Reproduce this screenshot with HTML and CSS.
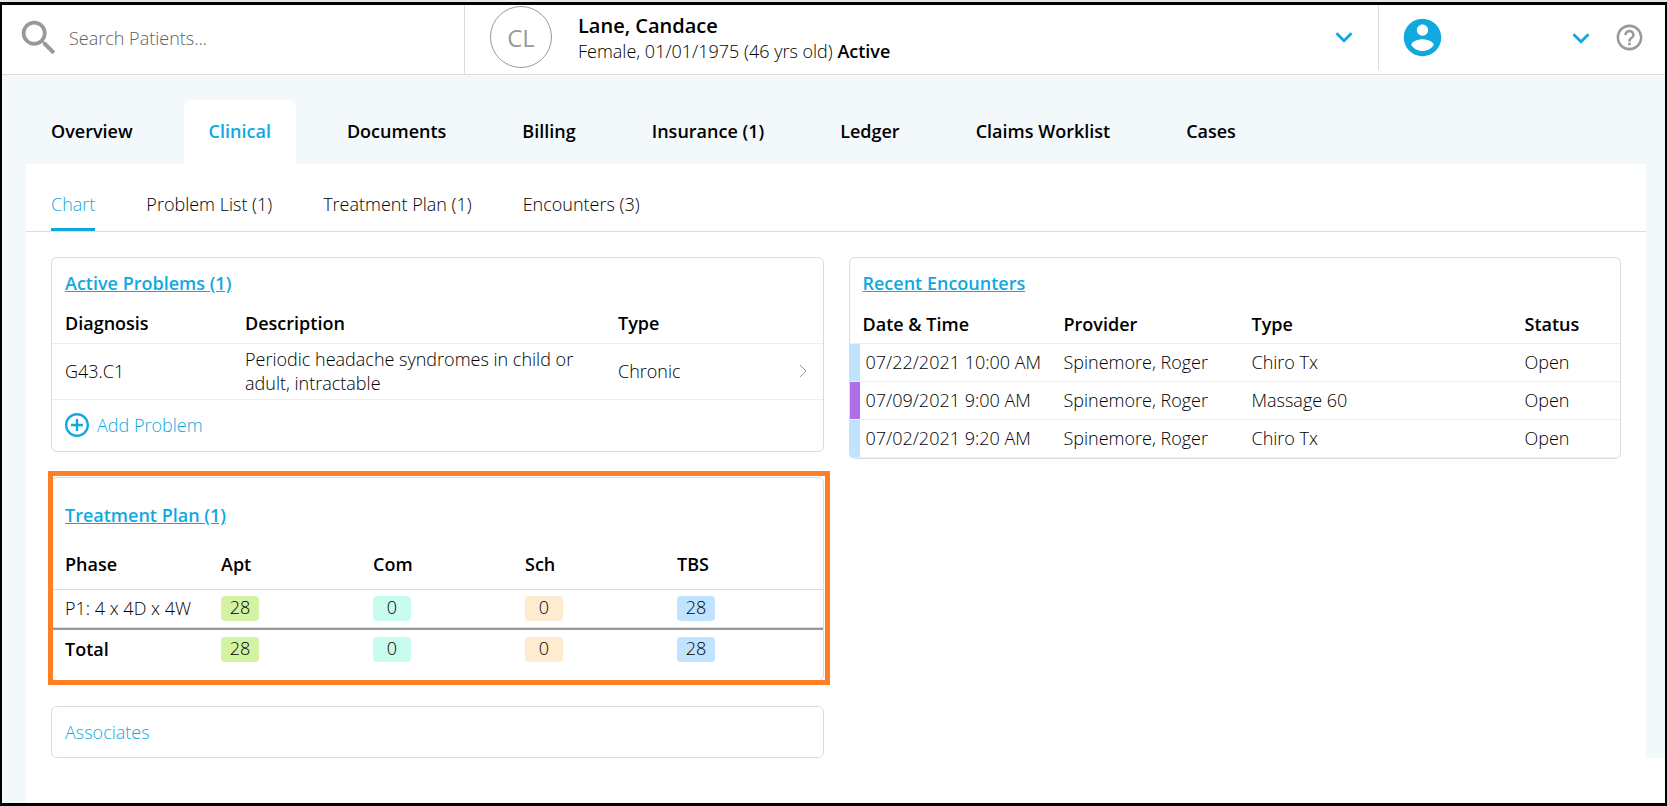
FILE: index.html
```html
<!DOCTYPE html>
<html lang="en">
<head>
<meta charset="utf-8">
<meta name="viewport" content="width=device-width, initial-scale=1">
<title>Lane, Candace - Clinical Chart</title>
<link rel="stylesheet" href="styles.css">
</head>
<body>
<div class="app">
  <header class="topbar">
    <form class="search" role="search">
      <label class="search-label" for="patient-search" aria-label="Search patients">
        <svg class="icon-search" viewBox="0 0 24 24" aria-hidden="true"><path d="M15.5 14h-.79l-.28-.27A6.471 6.471 0 0 0 16 9.5 6.5 6.5 0 1 0 9.5 16c1.61 0 3.09-.59 4.23-1.57l.27.28v.79l5 4.99L20.49 19l-4.99-5zm-6 0C7.01 14 5 11.99 5 9.5S7.01 5 9.5 5 14 7.01 14 9.5 11.99 14 9.5 14z"/></svg>
      </label>
      <input class="search-input" id="patient-search" type="text" placeholder="Search Patients...">
    </form>
    <div class="patient">
      <div class="avatar">CL</div>
      <div class="patient-info">
        <div class="patient-name">Lane, Candace</div>
        <div class="patient-meta">Female, 01/01/1975 (46 yrs old) <strong>Active</strong></div>
      </div>
      <button class="icon-button" type="button" aria-label="Patient details">
        <svg class="icon-expand" viewBox="0 0 24 24" aria-hidden="true"><path d="M7.41 8.59 12 13.17l4.59-4.58L18 10l-6 6-6-6z"/></svg>
      </button>
    </div>
    <div class="account">
      <svg class="icon-user" viewBox="0 0 24 24" aria-hidden="true"><path d="M12 2C6.48 2 2 6.48 2 12s4.48 10 10 10 10-4.48 10-10S17.52 2 12 2zm0 3c1.66 0 3 1.34 3 3s-1.34 3-3 3-3-1.34-3-3 1.34-3 3-3zm0 14.2c-2.5 0-4.71-1.28-6-3.22.03-1.99 4-3.08 6-3.08 1.99 0 5.97 1.09 6 3.08-1.29 1.94-3.5 3.22-6 3.22z"/></svg>
      <button class="icon-button account-menu" type="button" aria-label="Account menu">
        <svg class="icon-expand" viewBox="0 0 24 24" aria-hidden="true"><path d="M7.41 8.59 12 13.17l4.59-4.58L18 10l-6 6-6-6z"/></svg>
      </button>
      <button class="icon-button" type="button" aria-label="Help">
        <svg class="icon-help" viewBox="0 0 24 24" aria-hidden="true"><path d="M11 18h2v-2h-2v2zm1-16C6.48 2 2 6.48 2 12s4.48 10 10 10 10-4.48 10-10S17.52 2 12 2zm0 18c-4.41 0-8-3.59-8-8s3.59-8 8-8 8 3.59 8 8-3.59 8-8 8zm0-14c-2.21 0-4 1.79-4 4h2c0-1.1.9-2 2-2s2 .9 2 2c0 2-3 1.75-3 5h2c0-2.25 3-2.5 3-5 0-2.21-1.79-4-4-4z"/></svg>
      </button>
    </div>
  </header>

  <nav class="tabs" aria-label="Patient sections">
    <a class="tab" href="#overview">Overview</a>
    <a class="tab tab-active" href="#clinical" aria-current="page">Clinical</a>
    <a class="tab" href="#documents">Documents</a>
    <a class="tab" href="#billing">Billing</a>
    <a class="tab" href="#insurance">Insurance (1)</a>
    <a class="tab" href="#ledger">Ledger</a>
    <a class="tab" href="#claims">Claims Worklist</a>
    <a class="tab" href="#cases">Cases</a>
  </nav>

  <main class="main">
    <div class="panel">
      <nav class="subtabs" aria-label="Clinical sections">
        <a class="subtab subtab-active" href="#chart" aria-current="page">Chart</a>
        <a class="subtab" href="#problems">Problem List (1)</a>
        <a class="subtab" href="#plan">Treatment Plan (1)</a>
        <a class="subtab" href="#encounters">Encounters (3)</a>
      </nav>
      <div class="columns">
        <div class="column">
          <section class="card">
            <h2 class="card-title"><a href="#problems">Active Problems (1)</a></h2>
            <table class="table problems">
              <colgroup><col class="col-diagnosis"><col class="col-description"><col></colgroup>
              <thead><tr><th>Diagnosis</th><th>Description</th><th>Type</th></tr></thead>
              <tbody>
                <tr>
                  <td>G43.C1</td>
                  <td>Periodic headache syndromes in child or adult, intractable</td>
                  <td>
                    <div class="type-cell">Chronic
                      <button class="icon-button" type="button" aria-label="Open problem">
                        <svg class="icon-next" viewBox="0 0 8 14" aria-hidden="true"><path d="M1 1l6 6-6 6"/></svg>
                      </button>
                    </div>
                  </td>
                </tr>
              </tbody>
            </table>
            <button class="add-button" type="button">
              <svg class="icon-add" viewBox="2 2 20 20" aria-hidden="true"><path d="M13 7h-2v4H7v2h4v4h2v-4h4v-2h-4V7zm-1-5C6.48 2 2 6.48 2 12s4.48 10 10 10 10-4.48 10-10S17.52 2 12 2zm0 18c-4.41 0-8-3.59-8-8s3.59-8 8-8 8 3.59 8 8-3.59 8-8 8z"/></svg>
              Add Problem
            </button>
          </section>

          <section class="card plan-card">
            <h2 class="card-title"><a href="#plan">Treatment Plan (1)</a></h2>
            <table class="table plan">
              <colgroup><col class="col-phase"><col class="col-count"><col class="col-count"><col class="col-count"><col></colgroup>
              <thead><tr><th>Phase</th><th>Apt</th><th>Com</th><th>Sch</th><th>TBS</th></tr></thead>
              <tbody>
                <tr>
                  <td>P1: 4 x 4D x 4W</td>
                  <td><span class="badge badge-apt">28</span></td>
                  <td><span class="badge badge-com">0</span></td>
                  <td><span class="badge badge-sch">0</span></td>
                  <td><span class="badge badge-tbs">28</span></td>
                </tr>
              </tbody>
              <tfoot>
                <tr>
                  <th>Total</th>
                  <td><span class="badge badge-apt">28</span></td>
                  <td><span class="badge badge-com">0</span></td>
                  <td><span class="badge badge-sch">0</span></td>
                  <td><span class="badge badge-tbs">28</span></td>
                </tr>
              </tfoot>
            </table>
            <div class="highlight"></div>
          </section>

          <section class="card associates">
            <a href="#associates">Associates</a>
          </section>
        </div>

        <div class="column">
          <section class="card">
            <h2 class="card-title"><a href="#encounters">Recent Encounters</a></h2>
            <table class="table encounters">
              <colgroup><col class="col-date"><col class="col-provider"><col class="col-visit"><col></colgroup>
              <thead><tr><th>Date &amp; Time</th><th>Provider</th><th>Type</th><th>Status</th></tr></thead>
              <tbody>
                <tr class="visit-chiro"><td>07/22/2021 10:00 AM</td><td>Spinemore, Roger</td><td>Chiro Tx</td><td>Open</td></tr>
                <tr class="visit-massage"><td>07/09/2021 9:00 AM</td><td>Spinemore, Roger</td><td>Massage 60</td><td>Open</td></tr>
                <tr class="visit-chiro"><td>07/02/2021 9:20 AM</td><td>Spinemore, Roger</td><td>Chiro Tx</td><td>Open</td></tr>
              </tbody>
            </table>
          </section>
        </div>
      </div>
    </div>
  </main>
</div>
</body>
</html>
```
FILE: styles.css
```css
:root {
  --blue: #0fa9df;
  --pale: #f3f8fb;
  --line: #dcdcdc;
  --line-light: #eeeeee;
  --grey: #999999;
  --regular: 300;
  --bold: 600;
}

* { box-sizing: border-box; }

body {
  margin: 0;
  padding-top: 2px;
  background: #e3e6ea;
  color: #000;
  font: 18px/24px "Open Sans", "Noto Sans", sans-serif;
  font-weight: var(--regular);
}

a { color: var(--blue); text-decoration: none; }

strong, th { font-weight: var(--bold); }

.app {
  display: flex;
  flex-direction: column;
  min-height: calc(100vh - 2px);
  border: solid #000;
  border-width: 3px 2px;
  background: #fff;
}

/* Top bar */
.topbar {
  display: flex;
  height: 70px;
  border-bottom: 1px solid var(--line);
}

.search {
  display: flex;
  align-items: center;
  width: 463px;
  padding: 0 14px 4px;
  border-right: 1px solid var(--line);
}

.search-label { display: flex; }

.search-input {
  flex: 1;
  min-width: 0;
  margin-left: 7px;
  padding: 0;
  border: 0;
  outline: 0;
  background: none;
  color: #000;
  font: inherit;
}

.search-input::placeholder { color: #606060; opacity: 1; }

.patient {
  display: flex;
  flex: 1;
  align-items: center;
  padding: 0 17px 5px 25px;
}

.avatar {
  width: 62px;
  height: 62px;
  border: 1px solid var(--grey);
  border-radius: 50%;
  color: var(--grey);
  font-size: 24px;
  font-weight: 400;
  line-height: 62px;
  text-align: center;
}

.patient-info { flex: 1; margin-left: 26px; padding-top: 2px; }

.patient-name { font-size: 20px; line-height: 26px; font-weight: var(--bold); }

.account {
  display: flex;
  align-items: center;
  width: 287px;
  height: 65px;
  padding: 0 20px 0 21px;
  border-left: 1px solid var(--line);
}

.account-menu { margin: 0 16px 0 auto; }

.icon-button {
  display: flex;
  padding: 0;
  border: 0;
  background: none;
  cursor: pointer;
}

.icon-search { width: 46px; height: 46px; fill: var(--grey); }
.icon-expand { width: 34px; height: 34px; fill: var(--blue); }
.icon-user { width: 45px; height: 45px; fill: var(--blue); }
.icon-help { width: 31px; height: 31px; fill: var(--grey); }
.icon-add { width: 24px; height: 24px; fill: var(--blue); }
.icon-next { width: 8px; height: 14px; fill: none; stroke: #999; }

/* Section tabs */
.tabs {
  display: flex;
  gap: 26px;
  padding: 25px 24px 0;
  background: var(--pale);
}

.tab {
  padding: 19px 25px 21px;
  border-radius: 6px 6px 0 0;
  color: #000;
  font-weight: var(--bold);
}

.tab-active { background: #fff; color: var(--blue); }

/* Panel */
.main { flex: 1; border-left: 24px solid var(--pale); }

.panel { border-right: 19px solid var(--pale); }

.subtabs {
  display: flex;
  gap: 51px;
  padding: 0 25px;
  border-bottom: 1px solid var(--line);
}

.subtab {
  padding: 28px 0 12px;
  border-bottom: 3px solid transparent;
  color: #000;
}

.subtab-active { border-color: var(--blue); color: var(--blue); }

.columns {
  display: grid;
  grid-template-columns: 1fr 1fr;
  gap: 25px;
  align-items: start;
  padding: 25px 25px 0;
}

.column { display: grid; gap: 25px; }

/* Cards */
.card {
  position: relative;
  border: 1px solid var(--line);
  border-radius: 6px;
}

.card-title {
  margin: 0;
  padding: 13px 13px 16px;
  font-size: 18px;
  font-weight: var(--bold);
}

.card-title a { text-decoration: underline; }

.table {
  width: 100%;
  table-layout: fixed;
  border-collapse: separate;
  border-spacing: 0;
}

.table th, .table td {
  padding: 0;
  border-bottom: 1px solid var(--line-light);
  text-align: left;
}

.table th:first-child, .table td:first-child { padding-left: 13px; }

.problems th { padding-bottom: 8px; }
.problems td { padding-top: 3px; padding-bottom: 4px; }
.col-diagnosis { width: 193px; }
.col-description { width: 373px; }

.type-cell {
  display: flex;
  justify-content: space-between;
  align-items: center;
  padding-right: 16px;
}

.add-button {
  display: flex;
  gap: 8px;
  align-items: center;
  padding: 13px 13px 14px;
  border: 0;
  background: none;
  color: var(--blue);
  font: inherit;
  cursor: pointer;
}

/* Treatment plan */
.plan-card .card-title { padding: 25px 13px; }
.plan-card { padding-bottom: 12px; }

.plan thead th { padding-bottom: 13px; border-color: var(--line); }

.plan tbody td {
  padding-top: 6px;
  padding-bottom: 6px;
  border-color: var(--line);
  vertical-align: top;
}

.plan tfoot th, .plan tfoot td {
  padding-top: 7px;
  padding-bottom: 6px;
  border-top: 2px solid var(--grey);
  border-bottom: 0;
  vertical-align: top;
}

.col-phase { width: 169px; }
.col-count { width: 152px; }

.badge {
  display: block;
  width: 38px;
  height: 25px;
  border-radius: 4px;
  line-height: 23px;
  text-align: center;
}

.badge-apt { background: #d3f3a3; }
.badge-com { background: #c8fcee; }
.badge-sch { background: #ffecd0; }
.badge-tbs { background: #c0e4ff; }

.highlight {
  position: absolute;
  inset: -7px -7px -5px -4px;
  border: 5px solid #ff7f27;
  pointer-events: none;
}

.associates { padding: 13px; }

/* Encounters */
.encounters th { padding-top: 1px; padding-bottom: 7px; }
.encounters td { padding-top: 6px; padding-bottom: 7px; }

.encounters td:first-child {
  padding-left: 16px;
  background: linear-gradient(#c0e4ff, #c0e4ff) left / 10px 100% no-repeat;
}

.encounters .visit-massage td:first-child {
  background-image: linear-gradient(#af6ee8, #af6ee8);
}

.col-date { width: 214px; }
.col-provider { width: 188px; }
.col-visit { width: 273px; }
```
